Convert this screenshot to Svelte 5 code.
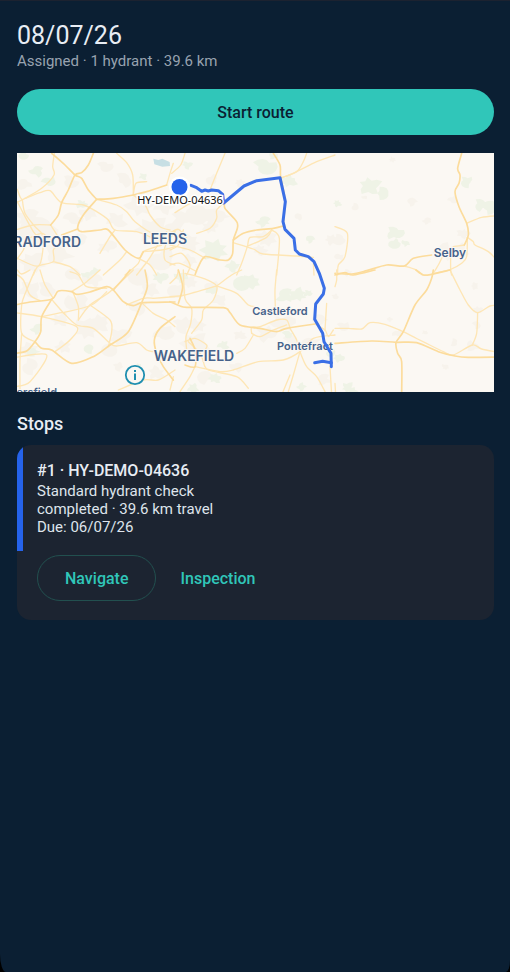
<script>
  const stops = [
    { id: 'HY-DEMO-04636', task: 'Standard hydrant check', status: 'completed', km: '39.6', due: '06/07/26' }
  ];

  // Map tiles: offset of each tile plus its minor roads, main roads, built-up areas and woods.
  const tiles = [
    {
      x: -21, y: -9,
      minor: [
        '133,10 128,50 132,75 95,115 45,145 15,160', '320,10 350,38 368,75 370,135', '45,145 90,128 120,122 155,158 220,165 260,185 295,210 315,240 380,245 430,265',
        '260,148 320,165 350,185 375,215 430,250 495,245', '370,135 405,165 420,195 450,230 480,240', '37,150 45,190 75,230 95,250 100,285 85,348 22,325',
        '22,155 45,200 70,245 85,262', '122,225 145,262 148,280 130,300 130,335 85,348 70,375', '130,335 180,350 210,375', '345,375 385,340 400,305 455,285', '380,375 415,330 440,290 470,245',
        '495,245 465,290 465,330 495,345', '15,240 70,225 122,225', '15,335 40,300 50,270 95,250 115,265', '22,118 30,140 37,150', '280,375 330,330 350,305', '315,240 300,260 270,310',
        '470,105 480,70 490,40', '385,325 420,345 440,375', '400,305 455,300 495,290', '370,135 378,100 410,95'
      ],
      major: ['125,10 165,45 195,75 215,85 235,120 260,148', '250,10 235,45 215,68 195,75 175,120 155,158 145,195 122,225', '260,148 310,145 370,135 410,125 470,105', '260,148 220,195 203,232 215,245 270,240 295,240 345,300 385,325 400,305', '203,237 155,255'],
      town: ['50,200,32', '85,240,45', '140,320,42', '190,205,25', '180,95,22', '235,190,25', '70,335,35', '430,240,50', '340,90,24', '290,290,24', '390,165,40', '465,165,34', '285,50,20', '40,100,22', '320,210,30', '455,330,45', '210,270,28'],
      wood: ['80,62,20', '118,95,20', '215,162,16', '255,365,14', '400,80,12', '40,15,16']
    },
    {
      x: 459, y: -9,
      minor: [
        '165,10 140,70 120,120', '45,10 32,45 5,70', '15,188 60,160 85,150', '165,155 140,180 140,205 120,235 80,250', '0,285 60,300 105,325', '190,278 250,297 280,312 380,318 430,322', '330,85 370,70 440,35 495,15', '330,85 380,65 400,35 410,10',
        '305,240 280,260 240,262 232,290 215,340 200,375', '305,240 328,265 320,375', '0,320 35,310 60,345 50,375', '0,250 25,238 50,262', '0,345 30,340 80,365', '430,340 432,375', '0,300 25,285 40,240', '230,290 290,262 305,240', '120,120 145,122 165,155'
      ],
      major: ['165,155 165,175 200,215 202,235 190,270 188,310 175,330 150,330 105,320 85,350 75,375', '190,270 220,250 260,240 310,235 340,228', '310,10 330,45 332,80 345,150 340,220'],
      town: ['90,195,45', '40,205,30', '120,230,25', '60,330,22', '125,90,20', '290,265,28', '270,300,20', '10,235,30', '60,280,30', '150,200,24', '210,100,14', '385,200,12', '485,270,18'],
      wood: ['285,50,30', '355,92,24', '280,215,20', '135,300,42', '52,45,14', '420,268,14', '310,18,12', '190,350,20', '35,380,20']
    },
    {
      x: 954, y: -9,
      minor: ['395,220 440,202 490,197', '397,262 415,275 420,285 460,305 490,335', '397,262 395,320 380,340 347,358 292,372', '208,348 240,358 265,375', '0,230 37,250 30,320 10,345 8,375', '347,300 347,358 350,375', '325,315 310,345 292,375', '355,290 388,285'],
      major: ['380,10 368,55 375,75 372,100 360,125 372,170 395,220 400,255 388,285', '290,315 235,325 208,348 155,345 95,362 50,372 0,370'],
      town: ['330,305,30', '375,300,24', '230,155,16', '275,212,12', '10,270,20', '60,172,14', '172,28,10', '355,150,14', '385,250,18', '88,142,8', '10,320,14'],
      wood: ['105,108,30', '140,130,20', '180,250,24', '178,280,16', '212,280,12', '395,95,20', '440,165,22', '465,172,24', '8,160,12']
    },
    {
      x: -21, y: 351,
      minor: [
        '290,55 230,50 205,15 180,5', '15,128 95,140 200,170 180,210 135,245', '125,88 160,128 200,165 250,175 300,220 320,228 380,218 410,240 430,245', '188,65 205,110 205,150', '205,150 240,105 300,65 370,0', '240,105 300,150 305,185 295,230',
        '15,262 110,255 60,335 15,350', '35,190 30,270 30,360', '75,0 50,60 35,105 35,190 75,215', '90,0 105,45 130,85', '160,128 245,105 290,65', '325,360 400,330 445,330 495,300', '395,98 430,130 470,150 495,170', '430,85 495,80',
        '185,65 230,35 270,0', '15,10 40,30 60,75 90,92', '95,140 155,128 165,132', '350,105 400,85 430,85', '480,360 490,320', '22,0 35,12 60,0'
      ],
      major: [
        '15,105 60,96 125,88 145,63 185,65 200,73 240,66 290,50 310,60 340,95 370,107 395,98 440,97 495,96', '125,88 95,140 92,185 75,215 50,243 15,250', '75,215 95,235 125,240 185,280 250,260 300,225 355,185 395,98 412,50 405,0', '310,60 345,20 360,0', '495,140 450,175 433,210 440,250 460,290 490,330'
      ],
      town: ['60,60,30', '110,60,28', '200,100,30', '270,160,30', '230,180,38', '150,150,26', '330,200,30', '300,240,30', '55,240,26', '60,290,26', '420,60,24', '380,110,28', '250,30,28', '325,290,16', '160,230,22', '390,20,28', '440,310,26', '460,190,28', '190,15,24'],
      wood: ['448,22,22', '82,178,18', '240,235,16', '68,245,18', '230,15,14', '385,290,10']
    },
    {
      x: 459, y: 351,
      minor: [
        '40,0 45,85 65,115 62,160 48,200 50,240', '45,10 100,25 140,48 130,90 100,120 95,150 65,190', '140,48 200,70 235,105 260,110', '320,0 315,60 316,110', '140,48 185,15 215,0', '0,80 45,75 140,48', '45,215 75,205 110,225 105,240', '75,290 150,305 190,300 265,275 340,270 390,245 430,205 495,195',
        '100,275 115,300 200,320 235,355', '245,190 245,172 270,170 320,150 350,150 360,175', '245,190 270,200 310,180 350,165', '360,175 380,210 390,245 410,290 440,320 465,365', '390,245 370,315 355,365', '200,250 225,235 250,195', '435,162 465,180 475,200 490,180', '75,290 60,320 30,365',
        '335,375 360,315', '55,215 90,250 100,275', '470,100 465,180', '480,290 485,375', '0,40 20,20 25,0'
      ],
      major: ['0,95 30,108 50,112 160,113 180,128 210,165 270,175 320,185 350,175 435,162', '25,0 38,50 25,100', '60,205 75,240 75,290 45,285'],
      town: ['60,35,20', '75,220,40', '40,165,28', '110,320,24', '290,190,30', '340,160,32', '420,220,28', '150,90,20', '120,50,24', '210,195,18', '200,290,20', '365,215,22', '80,165,24', '450,150,18', '460,330,20', '20,60,26'],
      wood: ['220,42,28', '242,35,24', '345,78,24', '385,75,26', '415,70,14', '127,62,16', '160,225,16', '135,325,18', '355,195,16', '70,355,18', '480,250,14', '395,350,14']
    },
    {
      x: 954, y: 351,
      minor: ['0,175 40,175 80,177 105,158 150,163 205,185 240,203 270,218 325,245 355,255 412,225 440,237 490,247', '345,0 375,60 400,105 428,128 465,108 490,106', '428,128 425,190 412,225', '5,0 5,30 0,50', '0,340 2,375'],
      major: ['0,220 110,213 183,217 245,218 310,245 360,258 400,262 490,261', '295,0 290,25 275,60 240,105 205,185 183,218 188,250 200,275 200,375', '243,0 265,15 290,13 345,0', '0,15 30,8 55,15 120,0'],
      town: ['190,190,16', '25,170,18', '412,228,18', '430,120,14', '270,188,8', '357,217,12', '330,290,10', '163,148,9', '420,48,12', '425,165,12', '0,80,10', '40,8,12'],
      wood: ['12,265,14', '38,352,18', '55,365,14']
    }
  ];

  const labels = [
    { text: 'BRADFORD', x: 64, y: 94, size: 14, anchor: 'end' },
    { text: 'LEEDS', x: 148, y: 91, size: 14, anchor: 'middle' },
    { text: 'WAKEFIELD', x: 177, y: 208, size: 14, anchor: 'middle' },
    { text: 'Selby', x: 433, y: 104, size: 12, anchor: 'middle' },
    { text: 'Castleford', x: 263, y: 162, size: 11, anchor: 'middle' },
    { text: 'Pontefract', x: 288, y: 197, size: 11, anchor: 'middle' },
    { text: 'Huddersfield', x: 40, y: 243, size: 11, anchor: 'end' }
  ];

  // Smooth curve through a list of "x,y" points.
  function curve(list) {
    const p = list.split(' ').map((s) => s.split(',').map(Number));
    let d = `M${p[0]}`;
    for (let i = 0; i < p.length - 1; i++) {
      const a = p[i - 1] ?? p[i], b = p[i], c = p[i + 1], e = p[i + 2] ?? c;
      d += `C${b[0] + (c[0] - a[0]) / 7} ${b[1] + (c[1] - a[1]) / 7} ${c[0] - (e[0] - b[0]) / 7} ${c[1] - (e[1] - b[1]) / 7} ${c[0]} ${c[1]}`;
    }
    return d;
  }

  // Ragged outline round a centre point, always the same for the same input.
  function patch(spec) {
    const [x, y, r] = spec.split(',').map(Number);
    const pts = [];
    for (let i = 0; i < 14; i++) {
      const n = Math.abs(Math.sin(x * 12.9 + y * 78.2 + i * 37.7) * 43758.5) % 1;
      const k = r * (0.5 + n * 0.75), t = (i / 14) * Math.PI * 2;
      pts.push(`${Math.round(x + Math.cos(t) * k * 1.1)},${Math.round(y + Math.sin(t) * k * 0.85)}`);
    }
    return pts.join(' ');
  }
</script>

<main>
  <header>
    <h1>08/07/26</h1>
    <p>Assigned · 1 hydrant · 39.6 km</p>
  </header>

  <button class="start" type="button">Start route</button>

  <div class="map">
    <svg class="canvas" viewBox="0 0 477 239" role="img" aria-label="Route map">
      <rect width="477" height="239" fill="#fbf8f3" />
      <g transform="scale(0.33333)">
        {#each tiles as t}
          <g transform="translate({t.x} {t.y})">
            {#each t.town as s}<polygon points={patch(s)} fill="#f7f3ec" />{/each}
            {#each t.wood as s}<polygon points={patch(s)} fill="#eff3e6" />{/each}
          </g>
        {/each}
        <path d="M409 17L424 21 436 17 458 27 459 39 436 41 412 34Z" fill="#c7dfe4" />
        {#each tiles as t}
          <g transform="translate({t.x} {t.y})" fill="none" stroke-linecap="round">
            {#each t.minor as r}<path d={curve(r)} stroke="#fee6b5" stroke-width="4" />{/each}
            {#each t.major as r}<path d={curve(r)} stroke="#fcdc9c" stroke-width="5" />{/each}
          </g>
        {/each}
      </g>
      {#each labels as l}
        <text class="place" x={l.x} y={l.y} font-size={l.size} text-anchor={l.anchor}>{l.text}</text>
      {/each}
      <g transform="scale(0.33333)" fill="none" stroke="#3a6fe6" stroke-width="9" stroke-linejoin="round" stroke-linecap="round">
        <path d="M522 97L537 103 554 115 564 111 574 114 584 111 604 113 617 124 620 150 681 99 719 83 789 74 805 146 798 206 804 229 831 256 835 291 847 303 874 311 891 326 907 361 922 406 919 423 896 453 893 499 917 541 921 566 942 601 943 641" />
        <path d="M893 629L917 625 943 629" />
      </g>
      <circle cx="162.500" cy="34" r="10.500" fill="#fff" />
      <circle cx="162.500" cy="34" r="8" fill="#2563eb" />
      <text class="hydrant" x="163" y="51" text-anchor="middle">HY-DEMO-04636</text>
    </svg>
    <button class="info" type="button" aria-label="Map information">
      <svg viewBox="0 0 22 22" width="22" height="22" fill="none" stroke="#1f8fb0">
        <circle cx="11" cy="11" r="9.200" fill="#fbf8f3" stroke-width="1.800" />
        <path d="M11 9.500V16M11 6V8" stroke-width="2" />
      </svg>
    </button>
  </div>

  <h2>Stops</h2>

  {#each stops as stop, i}
    <article>
      <div class="details">
        <h3>#{i + 1} · {stop.id}</h3>
        <p>{stop.task}</p>
        <p>{stop.status} · {stop.km} km travel</p>
        <p>Due: {stop.due}</p>
      </div>
      <div class="actions">
        <button class="outlined" type="button">Navigate</button>
        <button class="plain" type="button">Inspection</button>
      </div>
    </article>
  {/each}
</main>

<style>
  :global(body) {
    margin: 0;
    background: #000;
  }
  main {
    box-sizing: border-box;
    min-height: 100vh;
    padding: 20px 16px 20px 17px;
    border-top: 1px solid #1c2230;
    border-radius: 0 0 4px 6px / 0 0 12px 18px;
    background: #0b1f33;
    color: #e8edf4;
    font-family: Roboto, "Noto Sans", sans-serif;
  }
  h1,
  h2,
  h3,
  p {
    margin: 0;
  }
  h1 {
    font-size: 25px;
    line-height: 30px;
    font-weight: 400;
  }
  header p {
    font-size: 15px;
    line-height: 20px;
    color: #98a3b0;
  }
  button {
    font-family: inherit;
    font-size: 16px;
    font-weight: 500;
    cursor: pointer;
  }
  .start {
    display: block;
    width: 100%;
    height: 46px;
    margin: 18px 0;
    border: 0;
    border-radius: 23px;
    background: #30c6b9;
    color: #0b1f33;
  }
  .map {
    position: relative;
  }
  .canvas {
    display: block;
    width: 100%;
    overflow: hidden;
  }
  .place {
    font-family: Inter, "Open Sans", sans-serif;
    font-weight: 600;
    fill: #46628a;
    stroke: #fbf8f3;
    stroke-width: 2px;
    paint-order: stroke;
  }
  .hydrant {
    font-family: "Noto Sans", "Open Sans", sans-serif;
    font-size: 11px;
    fill: #111;
    stroke: #fff;
    stroke-width: 3px;
    paint-order: stroke;
  }
  .info {
    position: absolute;
    left: 107px;
    bottom: 6px;
    width: 22px;
    height: 22px;
    padding: 0;
    border: 0;
    background: none;
  }
  .info svg {
    display: block;
  }
  h2 {
    margin: 20px 0 9px;
    font-size: 18px;
    line-height: 24px;
    font-weight: 500;
  }
  article {
    border-radius: 14px;
    background: #1c2431;
    overflow: hidden;
  }
  .details {
    padding: 15px 14px;
    border-left: 6px solid #2563eb;
  }
  h3 {
    font-size: 16px;
    line-height: 22px;
    font-weight: 500;
  }
  .details p {
    font-size: 15px;
    line-height: 18px;
    color: #dfe4ec;
  }
  .actions {
    display: flex;
    padding: 4px 20px 19px;
  }
  .actions button {
    height: 46px;
    border: 1px solid transparent;
    border-radius: 23px;
    background: none;
    color: #30c6b9;
  }
  .actions .outlined {
    padding: 0 27px;
    border-color: #22504f;
  }
  .actions .plain {
    padding: 0 23px;
  }
</style>
